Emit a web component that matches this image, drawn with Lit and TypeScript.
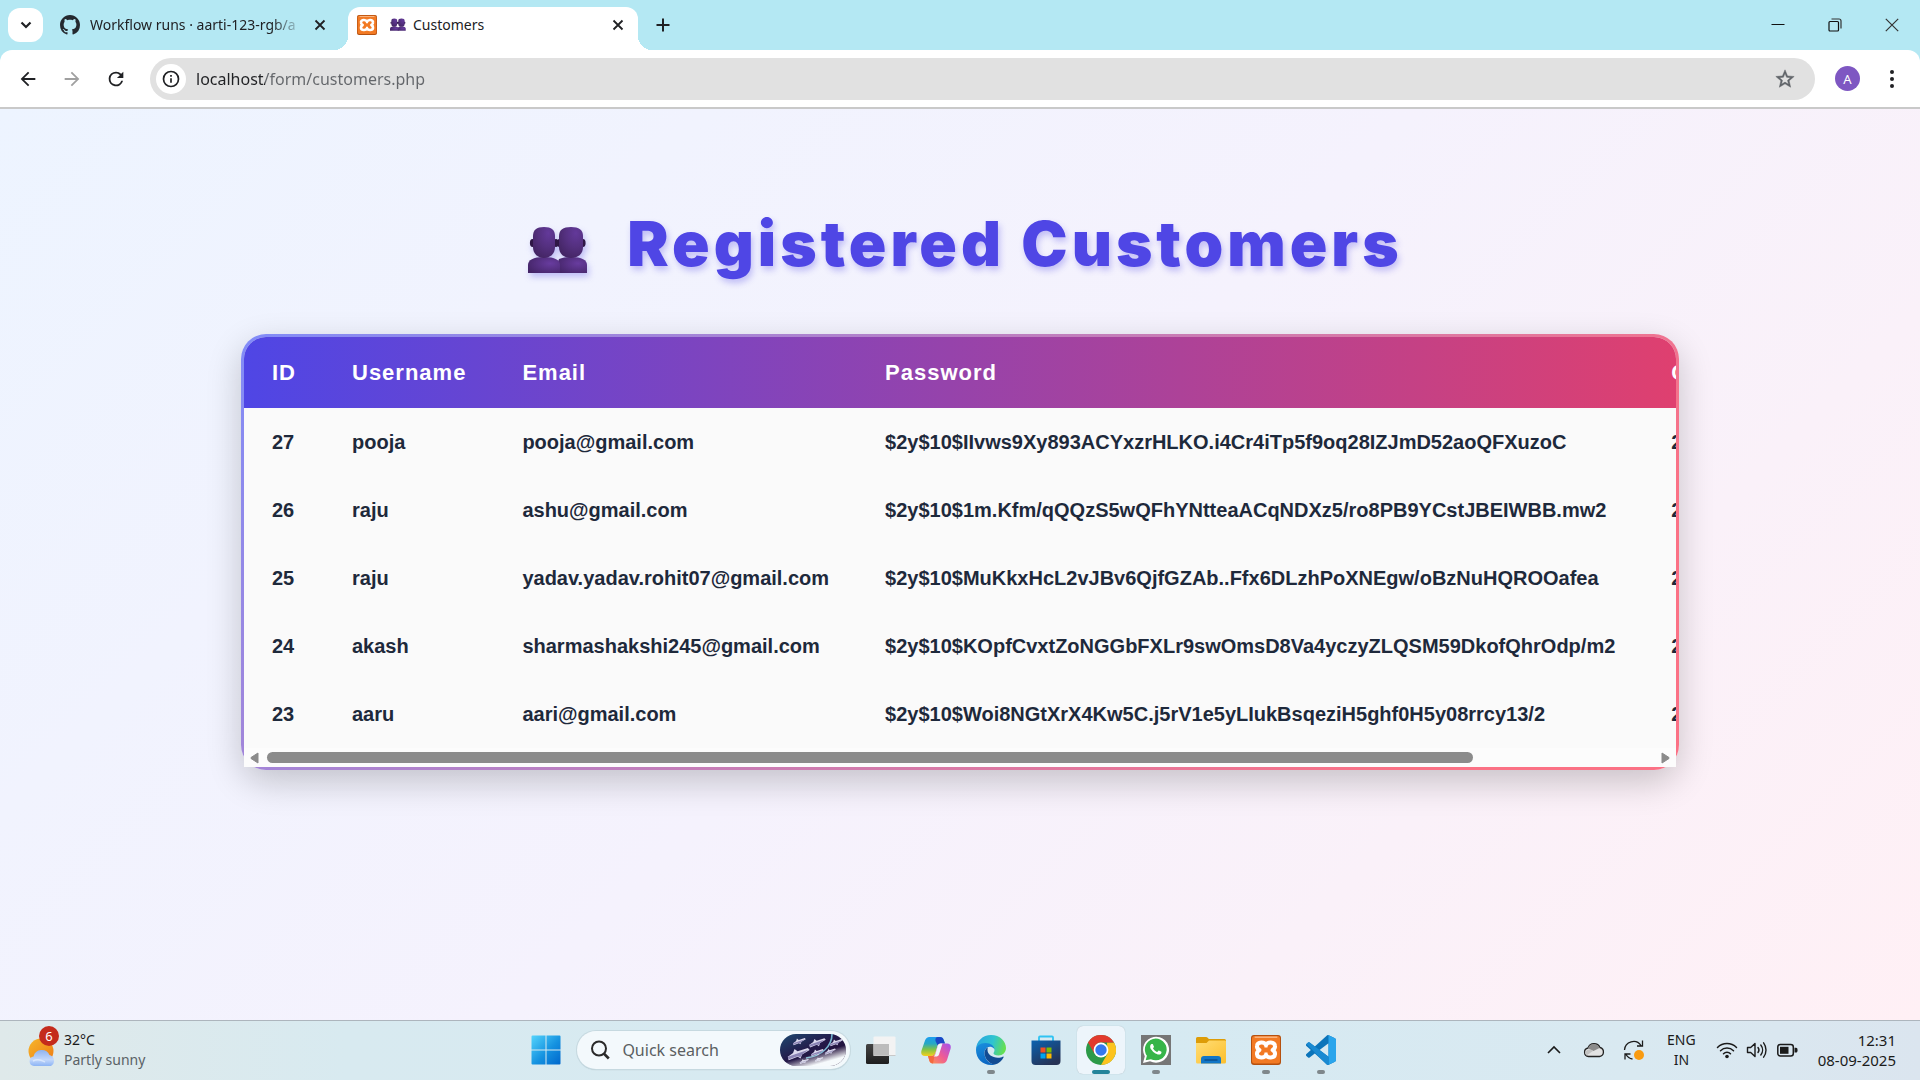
import { LitElement, html, svg, css } from "lit";
import type { TemplateResult } from "lit";
import { customElement } from "lit/decorators.js";

/* ---------- icons ---------- */

const icon = (size: number, box: number, body: TemplateResult) => html`<svg
  width=${size} height=${size} viewBox="0 0 ${box} ${box}" fill="none" aria-hidden="true">${body}</svg>`;

const people = (w: number, h: number) => html`<svg class="people" width=${w} height=${h} viewBox="0 0 82 60" aria-hidden="true">
  <defs>
    <radialGradient id="head" cx=".7" cy=".2" r=".9"><stop offset="0" stop-color="#63399a"/><stop offset=".5" stop-color="#54307f"/><stop offset="1" stop-color="#422461"/></radialGradient>
    <radialGradient id="bust" cx=".7" cy=".4" r=".8"><stop offset="0" stop-color="#683c9f"/><stop offset="1" stop-color="#432466"/></radialGradient>
  </defs>
  <g>
    <ellipse cx="42.500" cy="22" rx="2.600" ry="4" fill="#2f1746"/><ellipse cx="66" cy="22" rx="2.600" ry="4" fill="#2f1746"/>
    <path d="M40 52v-8l2-6c3-1.300 7-2 12-2 11 0 16 3 16 8v8z" fill="url(#bust)"/>
    <path d="M42 15c0-6 4-9 12-9s12 3 12 9v11c0 7-5 11-12 11s-12-4-12-11z" fill="url(#head)"/>
    <ellipse cx="15.500" cy="22" rx="2.600" ry="4" fill="#2f1746"/><ellipse cx="39" cy="22" rx="2.600" ry="4" fill="#2f1746"/>
    <path d="M11 52v-8c0-5 5-8 16-8s16 3 16 8v8z" fill="url(#bust)"/>
    <path d="M16 15c0-6 3.500-9 11-9s11 3 11 9v11c0 7-5 11-11 11s-11-4-11-11z" fill="url(#head)"/>
  </g></svg>`;

const github = icon(20, 16, svg`<path fill="#24292f" d="M8 0c4.42 0 8 3.58 8 8a8.013 8.013 0 0 1-5.45 7.59c-.4.08-.55-.17-.55-.38 0-.27.01-1.13.01-2.2 0-.75-.25-1.23-.54-1.48 1.78-.2 3.65-.88 3.65-3.95 0-.88-.31-1.59-.82-2.15.08-.2.36-1.02-.08-2.12 0 0-.67-.22-2.2.82-.64-.18-1.32-.27-2-.27-.68 0-1.36.09-2 .27-1.53-1.03-2.2-.82-2.2-.82-.44 1.1-.16 1.92-.08 2.12-.51.56-.82 1.28-.82 2.15 0 3.06 1.86 3.75 3.64 3.95-.23.2-.44.55-.51 1.07-.46.21-1.61.55-2.33-.66-.15-.24-.6-.83-1.23-.82-.67.01-.27.38.01.53.34.19.73.9.82 1.13.16.45.68 1.31 2.69.94 0 .67.01 1.3.01 1.49 0 .21-.15.45-.55.38A7.995 7.995 0 0 1 0 8c0-4.42 3.58-8 8-8Z"/>`);

const xampp = (size: number) => icon(size, 30, svg`
  <rect width="30" height="30" rx="3" fill="#b5500f"/><rect x="1" y="1" width="28" height="27.500" rx="2.500" fill="#f27a24"/>
  <rect x="3.500" y="1.500" width="23" height="1.500" rx=".7" fill="#f9b27c"/>
  <path d="M15 10C13.500 6.500 6.500 6.500 6 10.800c-.3 2 .8 3.300 2.400 4.200-1.600 1-2.700 2.200-2.400 4.300.5 4.200 7.500 4.200 9 .7 1.500 3.500 8.500 3.500 9-.7.300-2.100-.8-3.300-2.400-4.300 1.600-.9 2.700-2.200 2.400-4.200C23.500 6.500 16.500 6.500 15 10z" stroke="#fff" stroke-width="4" stroke-linejoin="round"/>
  <path d="M15 10v2.500M15 17.500v2.500" stroke="#fff" stroke-width="3"/>`);

const closeX = icon(14, 14, svg`<path d="M2.500 2.500l9 9M11.500 2.500l-9 9" stroke="#202124" stroke-width="1.800"/>`);
const plus = icon(16, 16, svg`<path d="M8 1.500v13M1.500 8h13" stroke="#202124" stroke-width="2"/>`);
const chevDown = icon(14, 14, svg`<path d="M2.500 4.500L7 9l4.500-4.500" stroke="#202124" stroke-width="2.200"/>`);
const arrowBack = icon(22, 24, svg`<path fill="#202124" d="M20 11H7.830l5.590-5.590L12 4l-8 8 8 8 1.410-1.410L7.830 13H20v-2z"/>`);
const arrowFwd = icon(22, 24, svg`<path fill="#a0a0a0" d="M4 13h12.170l-5.590 5.590L12 20l8-8-8-8-1.410 1.410L16.170 11H4v2z"/>`);
const reload = icon(22, 24, svg`<path fill="#202124" d="M17.650 6.350A7.958 7.958 0 0 0 12 4a8 8 0 1 0 7.730 10h-2.080A6 6 0 1 1 12 6c1.660 0 3.140.690 4.220 1.780L13 11h7V4l-2.350 2.350z"/>`);
const info = icon(18, 18, svg`<circle cx="9" cy="9" r="7.500" stroke="#202124" stroke-width="1.700"/><path d="M9 8.200v4.600M9 5v1.700" stroke="#202124" stroke-width="1.700"/>`);
const star = icon(22, 24, svg`<path fill="#5f6368" stroke="#5f6368" stroke-width=".5" d="M22 9.240l-7.190-.620L12 2 9.190 8.630 2 9.240l5.460 4.730L5.820 21 12 17.270 18.180 21l-1.630-7.030L22 9.240zM12 15.400l-3.760 2.270 1-4.280-3.320-2.880 4.380-.380L12 6.100l1.710 4.040 4.380.380-3.320 2.880 1 4.280L12 15.400z"/>`);
const dots = icon(20, 20, svg`<g fill="#202124"><circle cx="10" cy="3" r="2"/><circle cx="10" cy="10" r="2"/><circle cx="10" cy="17" r="2"/></g>`);
const minimize = icon(14, 14, svg`<path d="M.5 6.500h13" stroke="#111" stroke-width="1"/>`);
const restore = icon(14, 14, svg`<rect x="1" y="3.500" width="9.500" height="9.500" rx="1" stroke="#111" stroke-width="1.200"/><path d="M3.500 1H11a2 2 0 0 1 2 2v7.500" stroke="#333" stroke-width="1.200"/>`);
const winClose = icon(14, 14, svg`<path d="M.8.8l12.400 12.400M13.200.8L.8 13.200" stroke="#333" stroke-width="1.200"/>`);

const weather = icon(32, 32, svg`
  <defs><linearGradient id="sun" x1="0" y1="0" x2="1" y2="1"><stop stop-color="#f6b62c"/><stop offset="1" stop-color="#ee7a12"/></linearGradient>
  <linearGradient id="cl" x1="0" y1="0" x2="0" y2="1"><stop stop-color="#8fb3ee"/><stop offset=".6" stop-color="#c3d8fb"/><stop offset="1" stop-color="#8db4f5"/></linearGradient></defs>
  <circle cx="14" cy="15" r="12.500" fill="url(#sun)"/>
  <path d="M7 30a4.800 4.800 0 0 1-.5-9.500A8.500 8.500 0 0 1 22.500 19a6 6 0 0 1 1.500 11z" fill="url(#cl)"/>
  <path d="M6 25c6-3 10 0 12 1" stroke="#e6f0ff" stroke-width="1.500" opacity=".7"/>`);

const winLogo = icon(30, 30, svg`
  <defs><linearGradient id="win" x1="0" y1="0" x2="1" y2="1"><stop stop-color="#54d4fc"/><stop offset=".55" stop-color="#1592e0"/><stop offset="1" stop-color="#0067cc"/></linearGradient></defs>
  <path d="M1.500.5h13v14h-14v-13a1 1 0 0 1 1-1zM15.500.5h13a1 1 0 0 1 1 1v13h-14zM.5 15.500h14v14h-13a1 1 0 0 1-1-1zM15.500 15.500h14v13a1 1 0 0 1-1 1h-13z" fill="url(#win)"/>`);

const magnifier = icon(20, 20, svg`<circle cx="9" cy="8.500" r="7" stroke="#2a2a2a" stroke-width="2"/><path d="M13.800 13.500l5 5" stroke="#2a2a2a" stroke-width="2.600"/>`);

const ship = (x: number, y: number, s: number) => svg`<g transform="translate(${x} ${y}) scale(${s}) rotate(-14)">
  <path d="M-9 1l5-2 2-3 2 2.500L9-2l1 2-7 2-2 3-2-2-8 1z" fill="#dcd9ee"/><path d="M-9 1L9-.5 3 2l-2 2-2-1.500-8 .8z" fill="#8b84b5"/></g>`;
const shipsArt = html`<svg width="66" height="34" viewBox="0 0 66 34" aria-hidden="true">
  <defs><linearGradient id="sky" x1="0" y1="0" x2="1" y2="1"><stop stop-color="#1f4a70"/><stop offset=".45" stop-color="#241a4a"/><stop offset="1" stop-color="#210a2e"/></linearGradient>
  <linearGradient id="fade" x1=".72" y1=".5" x2=".98" y2=".95"><stop stop-color="#fff" stop-opacity="0"/><stop offset=".6" stop-color="#f6fafc"/></linearGradient></defs>
  <rect y="1" width="66" height="32" rx="16" fill="url(#sky)"/>
  <path d="M52 1c0 12-10 22-26 24" stroke="#76b4cf" stroke-width="1.600" fill="none"/>
  ${ship(19, 8, 0.7)}${ship(37, 9, 0.9)}${ship(18, 20, 1.2)}${ship(37, 19, 0.7)}${ship(50, 18, 0.6)}${ship(56, 9, 0.7)}${ship(24, 28, 0.5)}${ship(39, 26, 0.45)}
  <rect y="1" width="66" height="32" rx="16" fill="url(#fade)"/></svg>`;

const taskView = icon(30, 30, svg`
  <defs><linearGradient id="tv" x1="0" y1="0" x2="0" y2="1"><stop stop-color="#444"/><stop offset="1" stop-color="#1e1e1e"/></linearGradient></defs>
  <rect x="0" y="9" width="23" height="20" rx="1.500" fill="url(#tv)"/><rect x="7.500" y="1.500" width="22" height="19" rx="1" fill="#f3f3f3"/><path d="M7.500 9H23v11.500H7.500z" fill="#bcbcbc"/><path d="M7.500 20.500h22" stroke="#c8c8c8"/>`);

const copilot = icon(30, 30, svg`
  <defs><linearGradient id="cpA" x1="0" y1="0" x2="0" y2="1"><stop stop-color="#1c9df0"/><stop offset=".35" stop-color="#27a8c4"/><stop offset=".65" stop-color="#7fc348"/><stop offset="1" stop-color="#f5cf1c"/></linearGradient>
  <linearGradient id="cpB" x1="1" y1="0" x2="0" y2="1"><stop stop-color="#a351ee"/><stop offset=".5" stop-color="#ee5b96"/><stop offset="1" stop-color="#ff9a4a"/></linearGradient></defs>
  <path d="M8.500 2H19c2 0 3 1 3.600 2.700L24 8.500h-4c-2 0-3 1-3.600 2.800l-2 6.700c-.7 2-2 3-4 3H4C.5 21-.3 18.500.5 15.500L4 5.500C4.900 3.200 6.200 2 8.500 2z" fill="url(#cpA)"/>
  <path d="M17 2h2c2 0 3 1 3.600 2.700L24 8.500h-4c-1.600 0-2.700.6-3.300 2L14.500 6C14 3.500 15 2 17 2z" fill="#1b47c6"/>
  <path d="M21.500 28.500H12c-2 0-3-1-3.600-2.700L7 21h3.500c2 0 3.300-1 4-3l2-6.700c.6-1.800 1.600-2.800 3.600-2.800H26c3.500 0 4.300 2.500 3.500 5.500L26 25c-.9 2.300-2.200 3.500-4.500 3.500z" fill="url(#cpB)"/>
  <path d="M12 28.500c-2 0-3-1-3.600-2.700L7 21h3.500c1.400 0 2.600-.6 3.300-1.800z" fill="#f4693f"/>
  <path d="M16.800 10.500c.5-1.300 1.500-2 3.200-2h1.500l-3.500 11c-.5 1.500-1.700 2-3 2h-2.500c1-.5 1.700-1.500 2-2.700z" fill="#eef6fa"/>`);

const edge = icon(30, 30, svg`
  <defs><linearGradient id="eA" x1="0" y1=".3" x2="1" y2=".5"><stop stop-color="#2aa6e0"/><stop offset=".55" stop-color="#2fc4d0"/><stop offset="1" stop-color="#67e04c"/></linearGradient>
  <linearGradient id="eB" x1="0" y1="0" x2=".3" y2="1"><stop stop-color="#1a90de"/><stop offset="1" stop-color="#0c68c4"/></linearGradient></defs>
  <path d="M0 15C0 6 7 0 15 0c9 0 15 6.300 15 13 0 4.500-3.400 7.500-7.500 7.500-3.500 0-5-1.300-5-2.300 0-.8 1-1.200 1-3.200 0-3-2.800-6-8-6C4.500 9 .5 12 0 15z" fill="url(#eA)"/>
  <path d="M0 15c0-4 4-7 9.500-7 5.500 0 9 3.200 9 6.500 0 0-1.500-2.700-4.500-2.700-3.500 0-5.500 3-5.500 6.200C8.500 24 13 29 19 29.400 17.800 29.900 16.500 30 15 30 6.500 30 0 23.500 0 15z" fill="url(#eB)"/>
  <path d="M12 12.200C9.500 13.300 8.500 16 8.500 18c0 6.500 6 11.500 10.500 11.400 4-1.100 7-3.900 8.500-7 .3-.6-.2-1-.8-.7-1.200.6-2.700 1-4.700 1-6 0-10.500-3.500-10.500-7.700 0-1.200.1-2 .5-2.800z" fill="#124c94"/>`);

const store = icon(30, 30, svg`
  <defs><linearGradient id="st" x1="0" y1="0" x2=".6" y2="1"><stop stop-color="#0b62b0"/><stop offset="1" stop-color="#263356"/></linearGradient></defs>
  <path d="M8 6V2.500a1 1 0 0 1 1-1h12a1 1 0 0 1 1 1V6" stroke="#2fc3f2" stroke-width="1.800"/>
  <path d="M.5 5.500h29V26a4 4 0 0 1-4 4h-21a4 4 0 0 1-4-4z" fill="url(#st)"/>
  <path fill="#f25022" d="M9.500 12.500h5v5h-5z"/><path fill="#7fba00" d="M15.500 12.500h5v5h-5z"/><path fill="#00a4ef" d="M9.500 18.500h5v5h-5z"/><path fill="#ffb900" d="M15.500 18.500h5v5h-5z"/>`);

const chrome = icon(30, 30, svg`
  <circle cx="15" cy="15" r="15" fill="#2c9a48"/>
  <path d="M15 30l6.500-11.300L21 7.500h7A15 15 0 0 1 15 30z" fill="#fcc31e"/>
  <path d="M2 7.500A15 15 0 0 1 28 7.500H15C11 7.500 8.500 10 8.500 18.700z" fill="#e23a2e"/>
  <circle cx="15" cy="15" r="7.400" fill="#fff"/><circle cx="15" cy="15" r="5.700" fill="#3478ee"/>`);

const whatsapp = icon(30, 30, svg`
  <rect width="30" height="30" fill="#767676"/>
  <path d="M2 28l1.800-6.800A13 13 0 1 1 9 26.200z" fill="#fff"/><path d="M4.700 25.300l1.200-4.500a10.900 10.900 0 1 1 4 3.400z" fill="#37b549"/>
  <g transform="translate(3.500 3) scale(.94)"><path fill="#fff" d="M17.472 14.382c-.297-.149-1.758-.867-2.030-.967-.273-.099-.471-.148-.670.150-.197.297-.767.966-.940 1.164-.173.199-.347.223-.644.075-.297-.150-1.255-.463-2.390-1.475-.883-.788-1.480-1.761-1.653-2.059-.173-.297-.018-.458.130-.606.134-.133.298-.347.446-.520.149-.174.198-.298.298-.497.099-.198.050-.371-.025-.520-.075-.149-.669-1.612-.916-2.207-.242-.579-.487-.500-.669-.510-.173-.008-.371-.010-.570-.010-.198 0-.520.074-.792.372-.272.297-1.040 1.016-1.040 2.479 0 1.462 1.065 2.875 1.213 3.074.149.198 2.096 3.200 5.077 4.487.709.306 1.262.489 1.694.625.712.227 1.360.195 1.871.118.571-.085 1.758-.719 2.006-1.413.248-.694.248-1.289.173-1.413-.074-.124-.272-.198-.570-.347z"/></g>`);

const explorer = icon(30, 30, svg`
  <defs><linearGradient id="fo" x1="0" y1="0" x2="1" y2="1"><stop stop-color="#ffdd76"/><stop offset="1" stop-color="#fcbf2d"/></linearGradient></defs>
  <path d="M0 3.500a1.500 1.500 0 0 1 1.500-1.500H10c1.500 0 2 1.500 3 2h15.500A1.500 1.500 0 0 1 30 5.500V9H0z" fill="#dd9c08"/>
  <path d="M0 8h10.500l2.500-2.500h16A1 1 0 0 1 30 6.500V27a1.500 1.500 0 0 1-1.500 1.500h-27A1.500 1.500 0 0 1 0 27z" fill="url(#fo)"/>
  <path d="M5 28.500V24a3 3 0 0 1 3-3h14a3 3 0 0 1 3 3v4.500z" fill="#1276c6"/><path d="M8.500 25h13" stroke="#0b4f8d" stroke-width="1.500"/>`);

const vscode = icon(30, 24, svg`
  <path fill="#0b74ba" d="M23.150 2.587L18.210.210a1.494 1.494 0 0 0-1.705.290l-9.460 8.630-4.120-3.128a.999.999 0 0 0-1.276.057L.327 7.261A1 1 0 0 0 .326 8.740L3.899 12 .326 15.260a1 1 0 0 0 .001 1.479L1.650 17.940a.999.999 0 0 0 1.276.057l4.120-3.128 9.460 8.630a1.492 1.492 0 0 0 1.704.290l4.942-2.377A1.500 1.500 0 0 0 24 20.060V3.939a1.500 1.500 0 0 0-.850-1.352zm-5.146 14.861L10.826 12l7.178-5.448v10.896z"/>
  <path fill="#2aa5ec" d="M18 .2l5.150 2.387A1.500 1.500 0 0 1 24 3.940v16.120a1.500 1.500 0 0 1-.850 1.350L18 23.800z"/>
  <path fill="#1a8ad2" d="M.327 7.261L1.650 6.060a1 1 0 0 1 1.276-.057L18 17.448V23.800c-.5.200-1 .1-1.500-.3z"/>`);

const chevUp = icon(16, 16, svg`<path d="M2 11l6-6 6 6" stroke="#1b1b1b" stroke-width="1.600"/>`);
const cloud = icon(22, 22, svg`<path d="M5.500 17.500A4.300 4.300 0 0 1 5 9a6.500 6.500 0 0 1 12-.5 4.600 4.600 0 0 1-.5 9z" fill="#e2e2e2" stroke="#222" stroke-width="1.300"/><path d="M5 9.500a6 6 0 0 1 11.500-.5l-6 3z" fill="#8b8b8b"/><path d="M2 14c1-3.500 5-4.500 8-2l-6.500 4.500z" fill="#c2c2c2"/>`);
const sync = icon(22, 22, svg`<path d="M1.500 11A9 9 0 0 1 18 6.500M19.500 1.500v5.500h-5.500M9.500 20A9 9 0 0 1 3 15.500M2 20.500V15h5.500" stroke="#1b1b1b" stroke-width="1.300"/><circle cx="16" cy="16" r="5" fill="#f99b11"/>`);
const wifi = icon(22, 22, svg`<g stroke="#1b1b1b" stroke-width="1.500" stroke-linecap="round"><path d="M1.500 8.500a13.500 13.500 0 0 1 19 0"/><path d="M4.500 11.800a9.200 9.200 0 0 1 13 0"/><path d="M7.500 14.800a5 5 0 0 1 7 0"/></g><circle cx="11" cy="17.500" r="1.800" fill="#1b1b1b"/>`);
const sound = icon(22, 22, svg`<g stroke="#1b1b1b" stroke-width="1.400" stroke-linejoin="round" stroke-linecap="round"><path d="M1.500 8.500v5h3.200l4.300 4v-13l-4.300 4z"/><path d="M12 8.500a4 4 0 0 1 0 5"/><path d="M14.800 6a8 8 0 0 1 0 10"/><path d="M17.600 3.800a12 12 0 0 1 0 14.400"/></g>`);
const battery = icon(22, 22, svg`<rect x="1.800" y="5.500" width="15.500" height="11.500" rx="2.500" stroke="#1b1b1b" stroke-width="1.500"/><path d="M4 7.800h8.500v7H4z" fill="#1b1b1b"/><path d="M18.500 8.800h1.500c1 0 1.500.8 1.500 2.400s-.5 2.400-1.500 2.400h-1.500z" fill="#1b1b1b"/>`);
const triLeft = icon(12, 12, svg`<path d="M10 1v10L3 6.500v-1z" fill="#8b8b8b" stroke="#8b8b8b" stroke-linejoin="round"/>`);
const triRight = icon(12, 12, svg`<path d="M2 1v10l7-4.500v-1z" fill="#8b8b8b" stroke="#8b8b8b" stroke-linejoin="round"/>`);

/* ---------- browser chrome ---------- */

@customElement("browser-bar")
class BrowserBar extends LitElement {
  static styles = css`
    :host { display: block; font-family: "Noto Sans", "Open Sans", sans-serif; color: #202124; }
    button { border: 0; padding: 0; background: none; display: flex; align-items: center; justify-content: center; font: inherit; color: inherit; }
    .strip { display: flex; align-items: stretch; height: 50px; background: #b4e8f3; }
    .search { width: 35px; height: 34px; margin: 8px; background: #fff; border-radius: 12px; }
    .tab { display: flex; align-items: center; box-sizing: border-box; font-size: 14px; line-height: 20px; }
    .idle { width: 297px; padding: 0 21px 0 9px; gap: 10px; }
    .title { flex: 1; overflow: hidden; white-space: nowrap; }
    .fade { mask-image: linear-gradient(90deg, #000 85%, transparent); }
    .active { position: relative; width: 290px; margin-top: 7px; padding: 0 13px 7px 9px; background: #fff; border-radius: 12px 12px 0 0; gap: 10px; }
    .active::before, .active::after { content: ""; position: absolute; bottom: 0; width: 14px; height: 14px; }
    .active::before { right: 100%; background: radial-gradient(circle at 0 0, transparent 14px, #fff 14px); }
    .active::after { left: 100%; background: radial-gradient(circle at 100% 0, transparent 14px, #fff 14px); }
    .label { display: flex; align-items: center; gap: 4px; }
    .add { width: 50px; }
    .spacer { flex: 1; }
    .win { width: 57px; }
    .corners { background: #b4e8f3; }
    .bar { display: flex; align-items: center; height: 57px; background: #fff; border-radius: 12px 12px 0 0; border-bottom: 2px solid #c9c9c9; padding: 0 18px 0 6px; }
    .nav { width: 44px; height: 44px; }
    .omni { flex: 1; display: flex; align-items: center; height: 42px; border-radius: 21px; background: #e1e1e1; margin-left: 12px; padding: 0 19px 0 6px; gap: 10px; }
    .site { width: 30px; height: 30px; border-radius: 50%; background: #fff; }
    .url { flex: 1; border: 0; outline: 0; padding: 0; height: 30px; font: 16px/30px "Noto Sans", "Open Sans", sans-serif; color: transparent;
      background: linear-gradient(90deg, #202124 69px, #63666a 69px); -webkit-background-clip: text; background-clip: text; }
    .avatar { width: 25px; height: 25px; margin: 0 22px 0 20px; border-radius: 50%; background: #7e57c2; color: #fff; font-size: 13px; }
  `;
  render() {
    return html`
      <div class="strip">
        <button class="search" aria-label="Search tabs">${chevDown}</button>
        <div class="tab idle">${github}<span class="title fade">Workflow runs · aarti-123-rgb/a</span><button aria-label="Close tab">${closeX}</button></div>
        <div class="tab active">${xampp(20)}<span class="title label">${people(22, 16)}Customers</span><button aria-label="Close tab">${closeX}</button></div>
        <button class="add" aria-label="New tab">${plus}</button>
        <span class="spacer"></span>
        <button class="win" aria-label="Minimize">${minimize}</button>
        <button class="win" aria-label="Restore">${restore}</button>
        <button class="win" aria-label="Close">${winClose}</button>
      </div>
      <div class="corners"><div class="bar">
        <button class="nav" aria-label="Back">${arrowBack}</button>
        <button class="nav" aria-label="Forward">${arrowFwd}</button>
        <button class="nav" aria-label="Reload">${reload}</button>
        <div class="omni">
          <button class="site" aria-label="Site information">${info}</button>
          <input class="url" type="text" aria-label="Address" value="localhost/form/customers.php">
          <button aria-label="Bookmark">${star}</button>
        </div>
        <button class="avatar" aria-label="Profile">A</button>
        <button aria-label="Menu">${dots}</button>
      </div></div>`;
  }
}

/* ---------- customers page ---------- */

const customers = [
  ["27", "pooja", "pooja@gmail.com", "$2y$10$IIvws9Xy893ACYxzrHLKO.i4Cr4iTp5f9oq28IZJmD52aoQFXuzoC", "2025-09-08"],
  ["26", "raju", "ashu@gmail.com", "$2y$10$1m.Kfm/qQQzS5wQFhYNtteaACqNDXz5/ro8PB9YCstJBEIWBB.mw2", "2025-09-08"],
  ["25", "raju", "yadav.yadav.rohit07@gmail.com", "$2y$10$MuKkxHcL2vJBv6QjfGZAb..Ffx6DLzhPoXNEgw/oBzNuHQROOafea", "2025-09-08"],
  ["24", "akash", "sharmashakshi245@gmail.com", "$2y$10$KOpfCvxtZoNGGbFXLr9swOmsD8Va4yczyZLQSM59DkofQhrOdp/m2", "2025-09-08"],
  ["23", "aaru", "aari@gmail.com", "$2y$10$Woi8NGtXrX4Kw5C.j5rV1e5yLIukBsqeziH5ghf0H5y08rrcy13/2", "2025-09-08"],
];

@customElement("customers-page")
class CustomersPage extends LitElement {
  static styles = css`
    :host { display: block; background: linear-gradient(135deg, #edf4ff, #f5f2fd 50%, #fff0f5); font-family: "Liberation Sans", Arial, sans-serif; }
    .page { padding: 90px 241px 60px; }
    h1 { display: flex; justify-content: center; align-items: center; gap: 28px; margin: 0 0 45px; font: 900 62px/90px Inter, "Liberation Sans", sans-serif; letter-spacing: 4px; color: #4f46e5;
      text-shadow: 2px 4px 6px rgba(79, 70, 229, 0.3); white-space: nowrap; }
    .people { padding-top: 14px; filter: drop-shadow(2px 4px 3px rgba(79, 70, 229, 0.3)); }
    .card { padding: 3px; border-radius: 25px; background: linear-gradient(135deg, #818cf8, #fb7185 85%); box-shadow: 0 12px 35px rgba(0, 0, 0, 0.2); }
    .scroller { overflow: hidden; background: #fafafa; border-radius: 22px 22px 0 0; }
    table { border-collapse: collapse; min-width: 100%; white-space: nowrap; font-weight: 700; text-align: left; }
    thead { background: linear-gradient(90deg, #4f46e5, #f43f5e); color: #fff; }
    th { height: 71px; padding: 0 28px; font-size: 22px; letter-spacing: 1px; }
    th:last-child { min-width: 188px; }
    td { height: 68px; padding: 0 28px; font-size: 20px; color: #1e293b; }
    .track { display: flex; align-items: center; height: 19px; background: #fcfcfc; padding: 0 4px; gap: 7px; }
    .arrow { display: flex; border: 0; padding: 0; background: none; }
    .rail { flex: 1; display: flex; }
    .thumb { width: 87%; height: 11px; border-radius: 6px; background: #8b8b8b; }
  `;
  private scrollTable(step: number) {
    this.renderRoot.querySelector(".scroller")?.scrollBy({ left: step });
  }
  render() {
    return html`<div class="page">
      <h1>${people(82, 60)}<span>Registered Customers</span></h1>
      <div class="card">
        <div class="scroller"><table>
          <thead><tr>${["ID", "Username", "Email", "Password", "Created At"].map((h) => html`<th scope="col">${h}</th>`)}</tr></thead>
          <tbody>${customers.map((r) => html`<tr>${r.map((c) => html`<td>${c}</td>`)}</tr>`)}</tbody>
        </table></div>
        <div class="track">
          <button class="arrow" aria-label="Scroll left" @click=${() => this.scrollTable(-60)}>${triLeft}</button>
          <div class="rail"><div class="thumb"></div></div>
          <button class="arrow" aria-label="Scroll right" @click=${() => this.scrollTable(60)}>${triRight}</button>
        </div>
      </div>
    </div>`;
  }
}

/* ---------- taskbar ---------- */

const apps = [
  { name: "Task view", art: taskView, state: "" },
  { name: "Copilot", art: copilot, state: "" },
  { name: "Edge", art: edge, state: "open" },
  { name: "Store", art: store, state: "" },
  { name: "Chrome", art: chrome, state: "current" },
  { name: "WhatsApp", art: whatsapp, state: "open" },
  { name: "File Explorer", art: explorer, state: "" },
  { name: "XAMPP", art: xampp(30), state: "open" },
  { name: "VS Code", art: vscode, state: "open" },
];

@customElement("task-bar")
class TaskBar extends LitElement {
  static styles = css`
    :host { display: grid; grid-template-columns: minmax(0, 10fr) auto minmax(0, 11fr); align-items: center; box-sizing: border-box; height: 60px; padding-bottom: 2px; border-top: 1px solid #adb5bd;
      background: linear-gradient(90deg, #dfe9ea, #d8eaf0 18%, #d6eaf2 60%, #d9e9f1 85%, #dbe5ef);
      font-family: "Noto Sans", "Open Sans", sans-serif; font-size: 14px; line-height: 20px; color: #1b1b1b; }
    button { border: 0; padding: 0; background: none; display: flex; align-items: center; font: inherit; color: inherit; }
    .weather { margin-left: 27px; gap: 5px; text-align: left; }
    .wx { position: relative; display: flex; padding-top: 4px; }
    .badge { position: absolute; top: -6px; left: 12px; width: 20px; height: 20px; border-radius: 50%; background: #c42b1c; color: #fff; text-align: center; font-size: 13px; }
    .muted { color: #5a6266; }
    .mid { display: flex; gap: 7px; align-items: center; }
    .app { position: relative; width: 48px; height: 48px; justify-content: center; border-radius: 6px; }
    .current { background: #edf5fb; box-shadow: 0 0 1px rgba(0, 0, 0, 0.25); }
    .open::after, .current::after { content: ""; position: absolute; bottom: 0; width: 8px; height: 4px; border-radius: 2px; background: #7f878b; }
    .current::after { width: 18px; background: #24849a; }
    .find { display: flex; align-items: center; box-sizing: border-box; width: 273px; height: 38px; padding: 0 4px 0 13px; gap: 12px; border-radius: 19px; background: #f3f9fc; box-shadow: 0 0 0 1px #c6d9e0, 0 1px 1px #9fb0b8; }
    .find input { flex: 1; min-width: 0; border: 0; outline: 0; padding: 0; background: none; font: 16px/24px "Noto Sans", "Open Sans", sans-serif; }
    .find input::placeholder { color: #5b5f62; opacity: 1; }
    .tray { display: flex; justify-content: flex-end; align-items: center; padding-right: 24px; }
    .more { padding-right: 21px; }
    .cloud { padding-right: 18px; }
    .lang { display: block; margin-left: 22px; text-align: center; }
    .status { gap: 8px; margin: 0 20px; }
    .clock { display: block; text-align: right; font-size: 15px; }
  `;
  render() {
    return html`
      <button class="weather"><span class="wx">${weather}<span class="badge">6</span></span><span>32°C<br><span class="muted">Partly sunny</span></span></button>
      <div class="mid">
        <button class="app" aria-label="Start">${winLogo}</button>
        <label class="find">${magnifier}<input type="text" placeholder="Quick search" aria-label="Quick search">${shipsArt}</label>
        ${apps.map((a) => html`<button class="app ${a.state}" aria-label=${a.name}>${a.art}</button>`)}
      </div>
      <div class="tray">
        <button class="more" aria-label="Hidden icons">${chevUp}</button>
        <button class="cloud" aria-label="OneDrive">${cloud}</button>
        <button aria-label="Updates">${sync}</button>
        <button class="lang">ENG<br>IN</button>
        <button class="status" aria-label="Network, volume, battery">${wifi}${sound}${battery}</button>
        <button class="clock">12:31<br>08-09-2025</button>
      </div>`;
  }
}

@customElement("app-root")
class AppRoot extends LitElement {
  static styles = css`
    :host { display: flex; flex-direction: column; min-height: 100vh; }
    .grow { flex: 1; }
  `;
  render() {
    return html`<browser-bar></browser-bar><customers-page class="grow"></customers-page><task-bar></task-bar>`;
  }
}
